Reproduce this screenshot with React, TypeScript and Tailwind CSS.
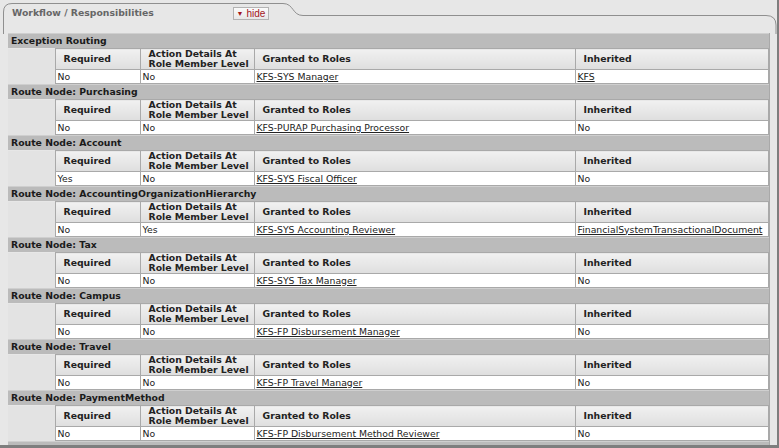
type Section = {
  name: string;
  req: string;
  act: string;
  role: string;
  inh: string;
  inhLink?: boolean;
};

const sections: Section[] = [
  { name: 'Exception Routing', req: 'No', act: 'No', role: 'KFS-SYS Manager', inh: 'KFS', inhLink: true },
  { name: 'Route Node: Purchasing', req: 'No', act: 'No', role: 'KFS-PURAP Purchasing Processor', inh: 'No' },
  { name: 'Route Node: Account', req: 'Yes', act: 'No', role: 'KFS-SYS Fiscal Officer', inh: 'No' },
  {
    name: 'Route Node: AccountingOrganizationHierarchy',
    req: 'No',
    act: 'Yes',
    role: 'KFS-SYS Accounting Reviewer',
    inh: 'FinancialSystemTransactionalDocument',
    inhLink: true,
  },
  { name: 'Route Node: Tax', req: 'No', act: 'No', role: 'KFS-SYS Tax Manager', inh: 'No' },
  { name: 'Route Node: Campus', req: 'No', act: 'No', role: 'KFS-FP Disbursement Manager', inh: 'No' },
  { name: 'Route Node: Travel', req: 'No', act: 'No', role: 'KFS-FP Travel Manager', inh: 'No' },
  { name: 'Route Node: PaymentMethod', req: 'No', act: 'No', role: 'KFS-FP Disbursement Method Reviewer', inh: 'No' },
  { name: 'Route Node: Award', req: 'No', act: 'No', role: 'KFS-SYS Manager', inh: 'No' },
];

const th =
  'border border-[#a9a9a9] bg-gradient-to-b from-[#f1f1f1] to-[#dedede] text-left align-middle pl-[8px] font-bold text-[#222] leading-[10px]';
const td = 'border border-[#a9a9a9] bg-white pl-[2px] h-[14px] leading-[12px] text-[#222] whitespace-nowrap';

function RoleSection({ s }: { s: Section }) {
  return (
    <div>
      <div className="h-[15px] bg-[#bbbbbb] border-t border-[#cfcfcf] pl-[3px] font-bold leading-[13px] text-[#1a1a1a]">
        {s.name}
      </div>
      <table className="w-full table-fixed border-collapse">
        <colgroup>
          <col className="w-[47px]" />
          <col className="w-[85px]" />
          <col className="w-[114px]" />
          <col className="w-[321px]" />
          <col />
        </colgroup>
        <tbody>
          <tr className="h-[21px]">
            <td rowSpan={2} className="bg-[#e3e3e3] border-r border-[#a9a9a9]" />
            <th className={th}>Required</th>
            <th className={th}>
              Action Details At
              <br />
              Role Member Level
            </th>
            <th className={th}>Granted to Roles</th>
            <th className={th}>Inherited</th>
          </tr>
          <tr>
            <td className={td}>{s.req}</td>
            <td className={td}>{s.act}</td>
            <td className={td}>
              <span className="underline">{s.role}</span>
            </td>
            <td className={td}>{s.inhLink ? <span className="underline">{s.inh}</span> : s.inh}</td>
          </tr>
        </tbody>
      </table>
    </div>
  );
}

export default function App() {
  return (
    <div className="relative w-[779px] h-[448px] overflow-hidden bg-[#e7e7e7] border-r-2 border-b-[3px] border-[#7e7e7e] font-['DejaVu_Sans',sans-serif] text-[9.3px]">
      <svg className="absolute left-0 top-0" width="779" height="34" viewBox="0 0 779 34">
        <path
          d="M3.5 34 L3.5 12 Q3.5 3.5 12 3.5 L283 3.5 C294 3.5 292 15.5 303 15.5 L766 15.5 Q776 15.5 776 25 L776 34"
          fill="none"
          stroke="#8f8f8f"
          strokeWidth="1"
        />
      </svg>
      <div className="relative h-[33px] flex items-start">
        <div className="pl-[12px] pt-[7px] w-[233px] font-bold text-[#666] leading-[12px]">Workflow / Responsibilities</div>
        <div className="mt-[7px] h-[13px] w-[36px] flex items-center justify-center gap-[3px] border border-[#b3b3b3] bg-gradient-to-b from-[#fafafa] to-[#e8e8e8] font-['Liberation_Sans',sans-serif] text-[10px] text-[#a3161c] leading-none">
          <span className="text-[7px]">▼</span>
          <span>hide</span>
        </div>
      </div>
      <div className="ml-[8px] w-[762px] border-r border-[#a9a9a9]">
        {sections.map((s) => (
          <RoleSection key={s.name} s={s} />
        ))}
      </div>
    </div>
  );
}
